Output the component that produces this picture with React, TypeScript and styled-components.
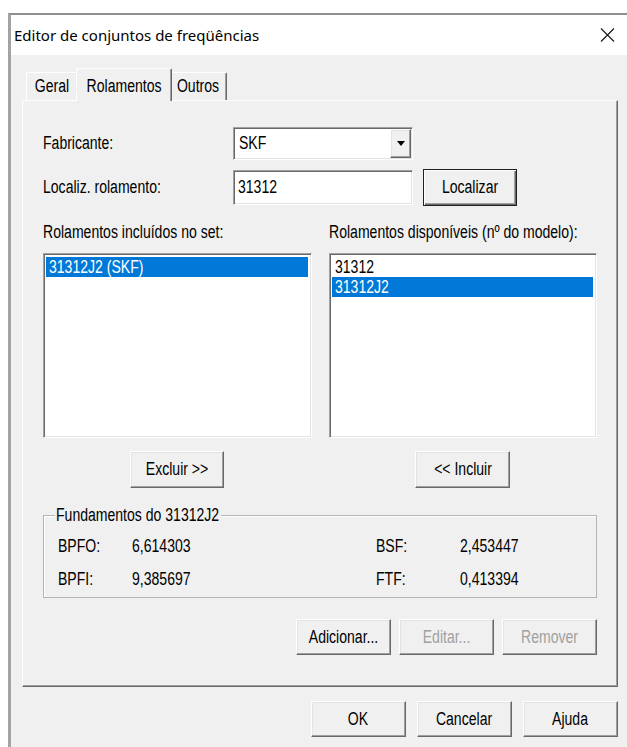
import React from "react";
import styled, { createGlobalStyle, css } from "styled-components";

const UI_FONT = `"Liberation Sans", Arial, sans-serif`;

const GlobalStyle = createGlobalStyle`
  html, body {
    margin: 0;
    padding: 0;
    background: #ffffff;
    overflow: hidden;
  }
  body {
    font-family: ${UI_FONT};
    font-size: 18px;
    color: #000;
  }
`;

/* The dialog face font is a narrow sans: Liberation Sans squeezed horizontally. */
const Txt = styled.span<{ $origin?: "left" | "center" }>`
  display: inline-block;
  flex: none;
  white-space: nowrap;
  transform: scaleX(0.78);
  transform-origin: ${(p) => p.$origin ?? "left"} center;
`;

const Screen = styled.div`
  width: 627px;
  height: 747px;
  overflow: hidden;
  box-sizing: border-box;
  padding: 13px 0 0 8px;
`;

const Window = styled.div`
  width: 640px;
  height: 760px;
  box-sizing: border-box;
  border-top: 2px solid #8f8f8f;
  border-left: 3px solid #a3a3a3;
  background: #f0f0f0;
  display: flex;
  flex-direction: column;
`;

const TitleBar = styled.div`
  height: 40px;
  flex: none;
  background: #ffffff;
  display: flex;
  align-items: center;
  justify-content: space-between;
  padding: 0 33px 0 3px;
`;

const Title = styled.span`
  font-family: "Noto Sans", "Open Sans", sans-serif;
  font-size: 15px;
  color: #000;
`;

const CloseGlyph = styled.svg`
  width: 15px;
  height: 16px;
  display: block;
`;

const Body = styled.div`
  padding: 13px 0 0 11px;
  display: flex;
  flex-direction: column;
`;

const TabStrip = styled.div`
  height: 32px;
  display: flex;
  align-items: flex-end;
  padding-left: 4px;
`;

const Tab = styled.div<{ $active?: boolean; $w: number }>`
  box-sizing: border-box;
  width: ${(p) => p.$w}px;
  height: ${(p) => (p.$active ? 33 : 28)}px;
  margin: 0 ${(p) => (p.$active ? "-2px -1px -2px" : "0 0 0")};
  border: 1px solid;
  border-color: #ffffff #696969 transparent #ffffff;
  border-bottom: none;
  border-radius: 2px 2px 0 0;
  box-shadow: inset -1px 0 #a0a0a0;
  background: #f0f0f0;
  display: flex;
  align-items: center;
  justify-content: center;
  padding-top: ${(p) => (p.$active ? 2 : 0)}px;
  position: relative;
  z-index: ${(p) => (p.$active ? 1 : 0)};
`;

const Panel = styled.div`
  width: 596px;
  height: 587px;
  box-sizing: border-box;
  border: 1px solid;
  border-color: #ffffff #696969 #696969 #ffffff;
  box-shadow: inset -1px -1px #a0a0a0;
  padding: 26px 20px 0 20px;
  display: flex;
  flex-direction: column;
`;

const FieldRow = styled.div<{ $gap?: number }>`
  display: flex;
  align-items: center;
  margin-top: ${(p) => p.$gap ?? 0}px;
`;

const FieldLabel = styled.span`
  width: 190px;
  flex: none;
  display: flex;
`;

const sunken = css`
  box-sizing: border-box;
  border: 1px solid;
  border-color: #a0a0a0 #ffffff #ffffff #a0a0a0;
  box-shadow: inset 1px 1px #696969, inset -1px -1px #e3e3e3;
  background: #ffffff;
`;

const raised = css`
  box-sizing: border-box;
  border: 1px solid;
  border-color: #ffffff #696969 #696969 #ffffff;
  box-shadow: inset -1px -1px #a0a0a0, inset 1px 1px #e3e3e3;
  background: #f0f0f0;
`;

const Combo = styled.div`
  ${sunken};
  width: 180px;
  height: 33px;
  padding: 1px;
  display: flex;
`;

const ComboValue = styled.div`
  flex: 1;
  display: flex;
  align-items: center;
  padding-left: 4px;
`;

const DropButton = styled.div`
  ${raised};
  width: 21px;
  display: flex;
  align-items: center;
  justify-content: center;
`;

const TextBox = styled.div`
  ${sunken};
  width: 180px;
  height: 35px;
  flex: none;
  padding: 0 4px;
  display: flex;
  align-items: center;
`;

const Button = styled.button<{ $default?: boolean; $w?: number; $h?: number }>`
  ${raised};
  width: ${(p) => p.$w ?? 95}px;
  height: ${(p) => p.$h ?? 37}px;
  flex: none;
  padding: 0;
  display: flex;
  align-items: center;
  justify-content: center;
  font-family: ${UI_FONT};
  font-size: 18px;
  color: #000;
  &:disabled {
    color: #a0a0a0;
  }
  ${(p) =>
    p.$default &&
    css`
      border: 1px solid #202020;
      box-shadow: inset 1px 1px #ffffff, inset -1px -1px #696969,
        inset -2px -2px #a0a0a0;
    `}
`;

const FindButton = styled(Button)`
  margin-left: 10px;
`;

const Columns = styled.div`
  display: grid;
  grid-template-columns: minmax(0, 1fr) minmax(0, 1fr);
  column-gap: 17px;
  margin-top: 16px;
`;

const Column = styled.div`
  display: flex;
  flex-direction: column;
  align-items: stretch;
  min-width: 0;
`;

const ColumnLabel = styled.div`
  height: 20px;
  line-height: 20px;
  display: flex;
`;

const ListBox = styled.div`
  ${sunken};
  height: 185px;
  margin-top: 11px;
  padding: 3px 3px 3px 2px;
`;

const ListItem = styled.div<{ $selected?: boolean }>`
  height: 20px;
  line-height: 20px;
  padding-left: 3px;
  display: flex;
  background: ${(p) => (p.$selected ? "#0078d7" : "transparent")};
  color: ${(p) => (p.$selected ? "#ffffff" : "#000")};
`;

const ColumnAction = styled.div`
  display: flex;
  justify-content: center;
  margin-top: 13px;
`;

const Group = styled.fieldset`
  margin: 17px 0 0;
  padding: 0 0 8px 14px;
  border: 1px solid #b4b4b4;
  box-shadow: inset 1px 1px #ffffff;
  min-width: 0;
`;

const GroupTitle = styled.legend`
  margin-left: -3px;
  padding: 0 1px;
  width: 166px;
  box-sizing: border-box;
  height: 20px;
  line-height: 20px;
  background: #f0f0f0;
  display: flex;
`;

const ValueGrid = styled.div`
  display: grid;
  grid-template-columns: 74px 244px 84px 1fr;
  grid-auto-rows: 20px;
  row-gap: 13px;
  align-items: center;
  margin-top: 11px;
`;

const ButtonRow = styled.div<{ $top: number; $gap: number }>`
  display: flex;
  justify-content: flex-end;
  gap: ${(p) => p.$gap}px;
  margin-top: ${(p) => p.$top}px;
`;

const DialogButtons = styled(ButtonRow)`
  width: 596px;
`;

const Arrow = () => (
  <svg width="8" height="5" viewBox="0 0 8 5">
    <polygon points="0,0 8,0 4,5" fill="#000" />
  </svg>
);

const fundamentals: [string, string][] = [
  ["BPFO:", "6,614303"],
  ["BSF:", "2,453447"],
  ["BPFI:", "9,385697"],
  ["FTF:", "0,413394"],
];

export default function App() {
  return (
    <>
      <GlobalStyle />
      <Screen>
        <Window>
          <TitleBar>
            <Title>Editor de conjuntos de freqüências</Title>
            <CloseGlyph viewBox="0 0 15 16">
              <path d="M1 1.5 L14 14.5 M14 1.5 L1 14.5" stroke="#1a1a1a" strokeWidth="1.15" fill="none" />
            </CloseGlyph>
          </TitleBar>
          <Body>
            <TabStrip>
              <Tab $w={52}>
                <Txt $origin="center">Geral</Txt>
              </Tab>
              <Tab $w={96} $active>
                <Txt $origin="center">Rolamentos</Txt>
              </Tab>
              <Tab $w={57}>
                <Txt $origin="center">Outros</Txt>
              </Tab>
            </TabStrip>
            <Panel>
              <FieldRow>
                <FieldLabel>
                  <Txt>Fabricante:</Txt>
                </FieldLabel>
                <Combo>
                  <ComboValue>
                    <Txt>SKF</Txt>
                  </ComboValue>
                  <DropButton>
                    <Arrow />
                  </DropButton>
                </Combo>
              </FieldRow>
              <FieldRow $gap={9}>
                <FieldLabel>
                  <Txt>Localiz. rolamento:</Txt>
                </FieldLabel>
                <TextBox>
                  <Txt>31312</Txt>
                </TextBox>
                <FindButton $default $w={94}>
                  <Txt $origin="center">Localizar</Txt>
                </FindButton>
              </FieldRow>
              <Columns>
                <Column>
                  <ColumnLabel>
                    <Txt>Rolamentos incluídos no set:</Txt>
                  </ColumnLabel>
                  <ListBox>
                    <ListItem $selected>
                      <Txt>31312J2 (SKF)</Txt>
                    </ListItem>
                  </ListBox>
                  <ColumnAction>
                    <Button $w={94}>
                      <Txt $origin="center">Excluir &gt;&gt;</Txt>
                    </Button>
                  </ColumnAction>
                </Column>
                <Column>
                  <ColumnLabel>
                    <Txt>Rolamentos disponíveis (nº do modelo):</Txt>
                  </ColumnLabel>
                  <ListBox>
                    <ListItem>
                      <Txt>31312</Txt>
                    </ListItem>
                    <ListItem $selected>
                      <Txt>31312J2</Txt>
                    </ListItem>
                  </ListBox>
                  <ColumnAction>
                    <Button $w={95}>
                      <Txt $origin="center">&lt;&lt; Incluir</Txt>
                    </Button>
                  </ColumnAction>
                </Column>
              </Columns>
              <Group>
                <GroupTitle>
                  <Txt>Fundamentos do 31312J2</Txt>
                </GroupTitle>
                <ValueGrid>
                  {fundamentals.map(([name, value]) => (
                    <React.Fragment key={name}>
                      <Txt>{name}</Txt>
                      <Txt>{value}</Txt>
                    </React.Fragment>
                  ))}
                </ValueGrid>
              </Group>
              <ButtonRow $top={21} $gap={8}>
                <Button $h={36}>
                  <Txt $origin="center">Adicionar...</Txt>
                </Button>
                <Button $h={36} disabled>
                  <Txt $origin="center">Editar...</Txt>
                </Button>
                <Button $h={36} disabled>
                  <Txt $origin="center">Remover</Txt>
                </Button>
              </ButtonRow>
            </Panel>
            <DialogButtons $top={14} $gap={11}>
              <Button $h={36}>
                <Txt $origin="center">OK</Txt>
              </Button>
              <Button $h={36}>
                <Txt $origin="center">Cancelar</Txt>
              </Button>
              <Button $h={36}>
                <Txt $origin="center">Ajuda</Txt>
              </Button>
            </DialogButtons>
          </Body>
        </Window>
      </Screen>
    </>
  );
}
